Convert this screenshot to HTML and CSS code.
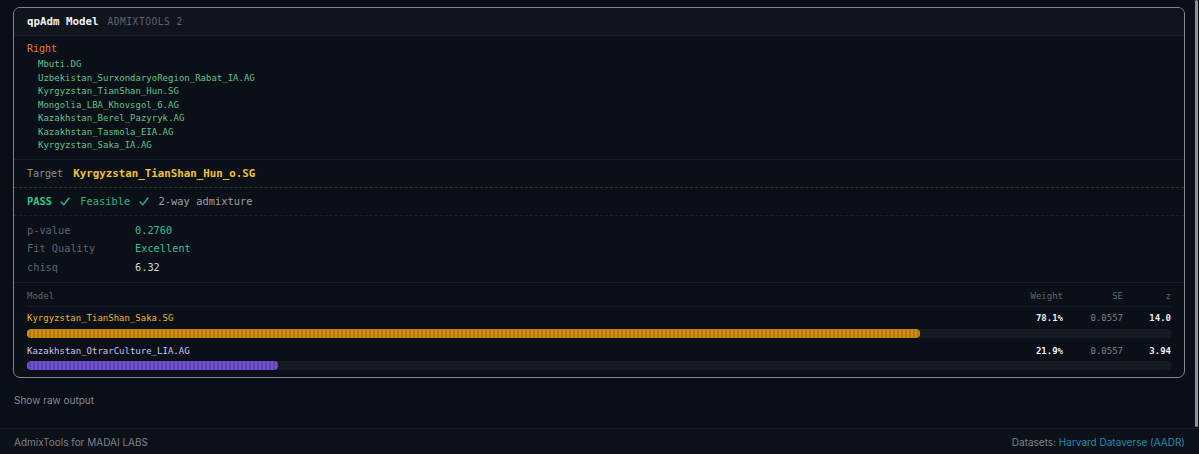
FILE: index.html
```html
<!DOCTYPE html>
<html lang="en">
<head>
  <meta charset="UTF-8" />
  <title>qpAdm Model</title>
  <link rel="stylesheet" href="styles.css">
</head>
<body>

<div class="main">
  <div class="card">
    <div class="card-head">
      <span class="card-title">qpAdm Model</span>
      <span class="card-tag">ADMIXTOOLS 2</span>
    </div>

    <div class="right-block">
      <div class="right-label">Right</div>
      <div class="pop">Mbuti.DG</div>
      <div class="pop">Uzbekistan_SurxondaryoRegion_Rabat_IA.AG</div>
      <div class="pop">Kyrgyzstan_TianShan_Hun.SG</div>
      <div class="pop">Mongolia_LBA_Khovsgol_6.AG</div>
      <div class="pop">Kazakhstan_Berel_Pazyryk.AG</div>
      <div class="pop">Kazakhstan_Tasmola_EIA.AG</div>
      <div class="pop">Kyrgyzstan_Saka_IA.AG</div>
    </div>

    <div class="target-row">
      <span class="target-label">Target</span>
      <span class="target-value">Kyrgyzstan_TianShan_Hun_o.SG</span>
    </div>

    <div class="status-row">
      <span class="pass">PASS
        <svg class="tick" viewBox="0 0 10 9"><path d="M1 5 L3.8 7.8 L9 1" /></svg>
      </span>
      <span class="feasible">Feasible
        <svg class="tick" viewBox="0 0 10 9"><path d="M1 5 L3.8 7.8 L9 1" /></svg>
      </span>
      <span class="way">2-way admixture</span>
    </div>

    <div class="stats">
      <div class="stat-label">p-value</div><div class="stat-value teal">0.2760</div>
      <div class="stat-label">Fit Quality</div><div class="stat-value green">Excellent</div>
      <div class="stat-label">chisq</div><div class="stat-value">6.32</div>
    </div>

    <div class="weights">
      <div class="w-head">
        <span>Model</span>
        <span class="num">Weight</span>
        <span class="num">SE</span>
        <span class="num">z</span>
      </div>

      <div class="w-row">
        <span class="w-name gold">Kyrgyzstan_TianShan_Saka.SG</span>
        <span class="num strong">78.1%</span>
        <span class="num dim">0.0557</span>
        <span class="num strong">14.0</span>
        <div class="track"><div class="fill fill-gold" style="width: 78.1%"></div></div>
      </div>

      <div class="w-row">
        <span class="w-name lilac">Kazakhstan_OtrarCulture_LIA.AG</span>
        <span class="num strong">21.9%</span>
        <span class="num dim">0.0557</span>
        <span class="num strong">3.94</span>
        <div class="track"><div class="fill fill-purple" style="width: 21.9%"></div></div>
      </div>
    </div>
  </div>

  <div class="raw-toggle">Show raw output</div>

  <!-- scrollbar thumb of the panel -->
  <div class="scroll-thumb"></div>
</div>

<div class="footer">
  <span>AdmixTools for MADAI LABS</span>
  <span>Datasets: <a class="footer-link" href="#">Harvard Dataverse (AADR)</a></span>
</div>

</body>
</html>
```

FILE: styles.css
```css
html, body {
  margin: 0;
  height: 100%;
}
body {
  background: #0a0e17;
  font-family: Inter, "Liberation Sans", sans-serif;
  display: flex;
  flex-direction: column;
  overflow: hidden;
}
.main {
  position: relative;
  height: 428px;
  padding: 7px 14px 0 13px;
  box-sizing: border-box;
}
.scroll-thumb {
  position: absolute;
  top: 0;
  right: 1px;
  width: 3px;
  height: 427px;
  border-radius: 2px;
  background: #8d9199;
}

/* カード本体 */
.card {
  border: 1.5px solid #80858e;
  border-radius: 7px;
  background: #0b0f18;
  font-family: "DejaVu Sans Mono", "Liberation Mono", monospace;
  overflow: hidden;
}
.card-head {
  height: 27px;
  padding: 0 13px;
  display: flex;
  align-items: center;
  gap: 9px;
  background: #10141d;
  border-bottom: 1px solid #1c212b;
}
.card-title {
  color: #f2f3f5;
  font-weight: bold;
  font-size: 10.8px;
}
.card-tag {
  color: #5e636d;
  font-size: 9.6px;
  letter-spacing: 0.5px;
}

.right-block {
  padding: 6px 13px 6px;
  border-bottom: 1px solid #1a1e28;
}
.right-label {
  color: #e2803a;
  font-size: 10px;
  line-height: 14px;
  margin-bottom: 2px;
}
.pop {
  color: #63c28b;
  font-size: 9px;
  line-height: 13.5px;
  padding-left: 11px;
}

.target-row {
  height: 27px;
  padding: 0 13px;
  display: flex;
  align-items: center;
  gap: 10px;
  border-bottom: 1px dashed #3a3420;
}
.target-label {
  color: #8a9099;
  font-size: 10px;
}
.target-value {
  color: #f0c232;
  font-weight: bold;
  font-size: 10.8px;
}

.status-row {
  height: 27px;
  padding: 0 13px;
  display: flex;
  align-items: center;
  gap: 10px;
  font-size: 10.4px;
  border-bottom: 1px dashed #1c212b;
}
.pass {
  color: #2fc48d;
  font-weight: bold;
}
.feasible {
  color: #2fb585;
}
.tick {
  width: 10px;
  height: 9px;
  margin-left: 2px;
  vertical-align: -1px;
  fill: none;
  stroke: currentColor;
  stroke-width: 1.3;
  stroke-linecap: round;
  stroke-linejoin: round;
}
.way {
  color: #9aa0a9;
}

.stats {
  display: grid;
  grid-template-columns: 108px auto;
  padding: 5px 13px 6px;
  font-size: 10.3px;
  line-height: 18.5px;
  border-bottom: 1px solid #1a1e28;
}
.stat-label {
  color: #5d636e;
}
.stat-value {
  color: #d2d5da;
}
.stat-value.teal {
  color: #2fbf9c;
}
.stat-value.green {
  color: #2fc48d;
}

/* 重みテーブル */
.weights {
  padding: 7px 13px 7px;
  font-size: 9px;
}
.w-head, .w-row {
  display: grid;
  grid-template-columns: 1fr 60px 60px 48px;
  align-items: center;
}
.w-head {
  color: #606672;
  line-height: 13px;
  padding-bottom: 3px;
  border-bottom: 1px solid #161a23;
}
.w-row {
  margin-top: 5px;
  line-height: 13px;
}
.w-row + .w-row {
  margin-top: 7px;
}
.num {
  text-align: right;
}
.strong {
  color: #eceef1;
  font-weight: bold;
}
.dim {
  color: #7b808a;
}
.gold {
  color: #e9b932;
}
.lilac {
  color: #cbc4f3;
}
.track {
  grid-column: 1 / -1;
  margin-top: 3.5px;
  height: 9px;
  border-radius: 4px;
  background: #161a23;
}
.fill {
  height: 100%;
  border-radius: 4px;
}
.fill-gold {
  background: repeating-linear-gradient(90deg, #cf8d14 0 2px, #b5780d 2px 4px);
}
.fill-purple {
  background: repeating-linear-gradient(90deg, #7150cc 0 2px, #5f41b6 2px 4px);
}

.raw-toggle {
  margin-top: 16px;
  margin-left: 1px;
  color: #858a93;
  font-size: 10px;
}

.footer {
  flex: 1;
  display: flex;
  align-items: center;
  justify-content: space-between;
  padding: 0 14px;
  border-top: 1px solid #171c26;
  background: #0c1019;
  color: #7c818b;
  font-size: 10px;
}
.footer-link {
  color: #1f8db0;
  text-decoration: none;
}
```
